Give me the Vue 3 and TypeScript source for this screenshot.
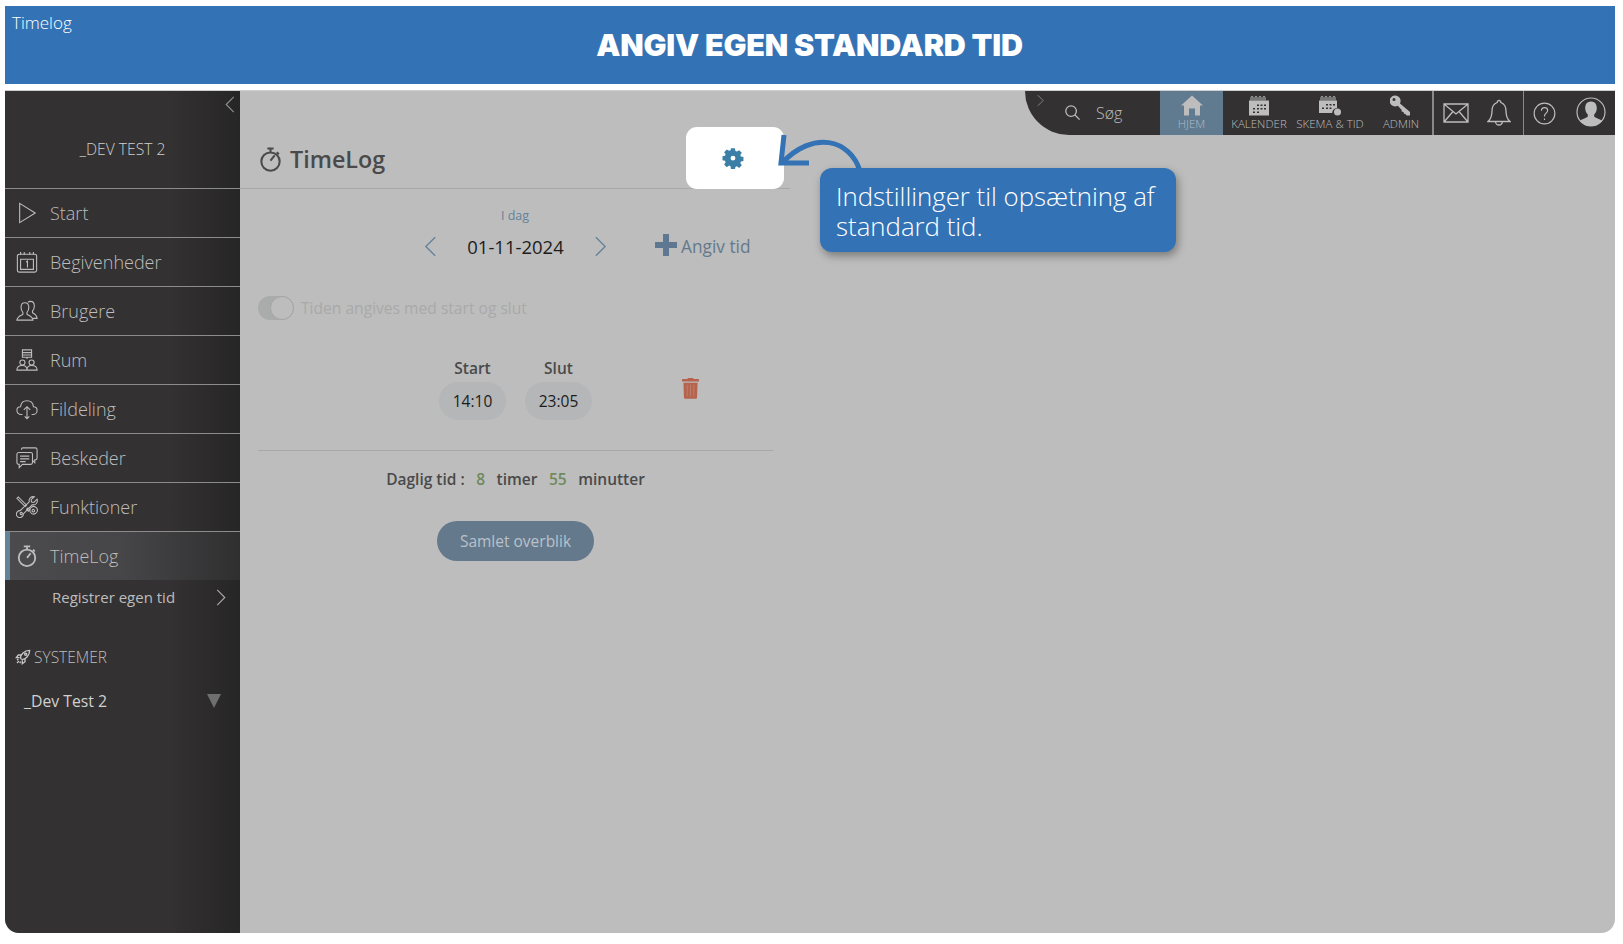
<template>
  <div class="page">
    <header class="banner">
      <span class="banner-label">Timelog</span>
      <h1 class="banner-title">ANGIV EGEN STANDARD TID</h1>
    </header>

    <div class="app">
      <aside class="sidebar">
        <svg class="collapse" viewBox="0 0 10 18"><path d="M9 1 1 9l8 8" /></svg>
        <div class="org-name">_DEV TEST 2</div>
        <nav>
          <div v-for="item in navItems" :key="item.label" class="nav-row" :class="{ active: item.active }">
            <svg class="nav-icon" viewBox="0 0 24 24">
              <path v-for="d in item.paths" :key="d" :d="d" />
            </svg>
            <span>{{ item.label }}</span>
          </div>
        </nav>
        <div class="sub-row">
          <span>Registrer egen tid</span>
          <svg class="sub-chevron" viewBox="0 0 10 18"><path d="M1 1l8 8-8 8" /></svg>
        </div>
        <div class="systems-head">
          <svg class="rocket" viewBox="0 0 24 24">
            <path d="M9 15c-1-2 0-6 3-9s6-4 10-4c0 4-1 7-4 10s-7 4-9 3Z" />
            <path d="M9 9H5l-3 4h5M15 15v4l-4 3v-5M6 18l-3 3M5 15l-2 2M9 19l-2 2" />
            <circle cx="16" cy="8" r="1.6" />
          </svg>
          <span>SYSTEMER</span>
        </div>
        <div class="system-row">
          <span>_Dev Test 2</span>
          <i class="system-caret"></i>
        </div>
      </aside>

      <main class="main">
        <section class="panel">
          <div class="panel-head">
            <h2 class="panel-title">
              <svg class="title-icon" viewBox="0 0 24 24">
                <path d="M9 1.5h6M12 1.5V5M18 5l2 2M12 13l4-5" />
                <circle cx="12" cy="14" r="8.8" />
              </svg>
              TimeLog
            </h2>
            <div class="gear-box">
              <svg class="gear" viewBox="0 0 24 24">
                <path fill-rule="evenodd" d="M9.6 1h4.8l.6 3.2 1.9.8 2.7-1.8 3.4 3.4-1.9 2.7.8 1.9 3.1.6v4.8l-3.1.6-.8 1.9 1.9 2.7-3.4 3.4-2.7-1.9-1.9.8-.6 3.1H9.6L9 23.2l-1.9-.8-2.7 1.9L1 20.9l1.9-2.7-.8-1.9L-1 15.7v-4.8l3.1-.6.8-1.9L1 5.7l3.4-3.4 2.7 1.8L9 3.4ZM12 10.200a3 3 0 1 0 0 6 3 3 0 0 0 0-6Z" transform="translate(1.4 .6) scale(.88)" />
              </svg>
            </div>
          </div>

          <div class="today">I dag</div>
          <div class="date-row">
            <svg class="date-chevron" viewBox="0 0 14 24"><path d="M12 2 2 12l10 10" /></svg>
            <span class="date">01-11-2024</span>
            <svg class="date-chevron" viewBox="0 0 14 24"><path d="M2 2l10 10L2 22" /></svg>
            <span class="add-time"><i class="plus"></i>Angiv tid</span>
          </div>

          <div class="toggle-row">
            <span class="toggle"><i class="knob"></i></span>
            <span>Tiden angives med start og slut</span>
          </div>

          <div class="time-row">
            <div v-for="t in times" :key="t.label" class="time-col">
              <label>{{ t.label }}</label>
              <span class="time-pill">{{ t.value }}</span>
            </div>
            <svg class="trash" viewBox="0 0 18 23">
              <path d="M6 2V.8h6V2h5a1 1 0 0 1 1 1v1.500H0V3a1 1 0 0 1 1-1ZM1.500 6h15l-.6 15.500a1.500 1.500 0 0 1-1.500 1.500H3.600a1.500 1.500 0 0 1-1.500-1.500Z" />
              <path class="trash-lines" d="M5.500 8v12.500M9 8v12.500M12.500 8v12.500" />
            </svg>
          </div>

          <div class="daily">
            <span>Daglig tid :</span><em>8</em><span>timer</span><em>55</em><span>minutter</span>
          </div>
          <button class="overview" type="button">Samlet overblik</button>
        </section>

        <div class="toolbar">
          <svg class="bar-chevron" viewBox="0 0 8 14"><path d="M1 1l6 6-6 6" /></svg>
          <div class="search">
            <svg viewBox="0 0 24 24"><circle cx="10" cy="10" r="7.500" /><path d="M15.500 15.500 22 22" /></svg>
            <span>Søg</span>
          </div>
          <div class="tool home">
            <svg viewBox="0 0 22 20"><path class="solid" d="M11 0 22 10h-3v10h-5v-7H8v7H3V10H0Z" /></svg>
            <span>HJEM</span>
          </div>
          <div class="tool cal">
            <svg viewBox="0 0 22 20">
              <path class="rings" d="M3 5V2a1 1 0 0 1 2 0v3M7 5V2a1 1 0 0 1 2 0v3M11 5V2a1 1 0 0 1 2 0v3M15 5V2a1 1 0 0 1 2 0v3" />
              <path class="solid" fill-rule="evenodd" d="M1 5h20v15H1ZM9 9v1.500h2V9Zm3.500 0v1.500h2V9Zm3.500 0v1.500h2V9ZM5 12.500V14h2v-1.500Zm4 0V14h2v-1.500Zm3.500 0V14h2v-1.500Zm3.500 0V14h2v-1.500ZM5 16v1.500h2V16Zm4 0v1.500h2V16Z" />
            </svg>
            <span>KALENDER</span>
          </div>
          <div class="tool sched">
            <svg viewBox="0 0 22 20">
              <path class="rings" d="M2 5V2a1 1 0 0 1 2 0v3M6 5V2a1 1 0 0 1 2 0v3M10 5V2a1 1 0 0 1 2 0v3M14 5V2a1 1 0 0 1 2 0v3" />
              <path class="solid" fill-rule="evenodd" d="M0 5h18v7.500a5.500 5.500 0 0 0-4.800 5H0ZM7 8.500V10h2V8.500Zm3.500 0V10h2V8.500Zm3.500 0V10h2V8.500ZM3 12v1.500h2V12Zm4 0v1.500h2V12Zm3.500 0v1.500h2V12Z" />
              <circle class="solid" cx="18.500" cy="16.500" r="3.500" />
            </svg>
            <span>SKEMA &amp; TID</span>
          </div>
          <div class="tool admin">
            <svg viewBox="0 0 22 20">
              <path class="solid" fill-rule="evenodd" d="M5 0a5.500 5.500 0 0 1 5 8l10 8.500V20h-3.500l-1-1.500-1.500-.2-.5-1.800-1.800-.5-.2-1.700-3.700-4A5.500 5.500 0 1 1 5 0ZM4 2.500a1.500 1.500 0 1 0 0 3 1.500 1.500 0 0 0 0-3Z" />
            </svg>
            <span>ADMIN</span>
          </div>
          <div class="icon-group mail-group">
            <svg class="mail" viewBox="0 0 26 20"><path d="M1 1h24v18H1ZM1 1l12 10L25 1M1 19l9-10.500M25 19l-9-10.500" /></svg>
            <svg class="bell" viewBox="0 0 24 28"><path d="M12 1.500a1.800 1.800 0 0 1 1.800 2C18 5 19 8 19 12c0 5 1 8 4 10.500H1C4 20 5 17 5 12c0-4 1-7 5.200-8.500A1.800 1.800 0 0 1 12 1.500ZM8.500 22.500a3.500 3.500 0 0 0 7 0" /></svg>
          </div>
          <div class="icon-group help-group">
            <svg class="help" viewBox="0 0 24 24">
              <circle cx="12" cy="12" r="10.800" />
              <path d="M8.800 9.200c0-2 1.400-3.300 3.300-3.300s3.200 1.200 3.200 3c0 2.700-3.300 2.800-3.300 5.600v.6M12 17.200v1.500" />
            </svg>
            <svg class="avatar" viewBox="0 0 30 30">
              <circle class="ring" cx="15" cy="15" r="14" />
              <path class="solid" d="M15 4.500c3.800 0 5.800 2.800 5.800 6.500 0 2.800-1 5.200-2.600 6.600v2c1 1.400 5.600 2.300 7.700 4.300A13 13 0 0 1 15 29 13 13 0 0 1 4.100 23.900c2.100-2 6.700-2.900 7.700-4.300v-2C10.200 16.200 9.200 13.800 9.200 11c0-3.700 2-6.500 5.800-6.500Z" />
            </svg>
          </div>
        </div>

        <svg class="arrow" viewBox="0 0 90 40">
          <path d="M83 38C73 6 36 -3 5 30" />
          <path d="M7 2 4 30h28" />
        </svg>
        <div class="callout">Indstillinger til opsætning af standard tid.</div>
      </main>
    </div>
  </div>
</template>

<script setup lang="ts">
interface NavItem {
  label: string
  paths: string[]
  active?: boolean
}

const navItems: NavItem[] = [
  { label: 'Start', paths: ['M4 1.500 21 12 4 22.500Z'] },
  {
    label: 'Begivenheder',
    paths: [
      'M3.500 3.500h17a2 2 0 0 1 2 2V21a2 2 0 0 1-2 2h-17a2 2 0 0 1-2-2V5.500a2 2 0 0 1 2-2Z',
      'M5 1v3M9 1v3M15 1v3M19 1v3M5 9h14v11H5ZM11 12l1.500-1v7'
    ]
  },
  {
    label: 'Brugere',
    paths: [
      'M9.500 3c3 0 4.500 2.300 4.500 5s-1 4.500-2 5.500v2c2 1.500 6 2 6.500 6.500H1c.5-4.500 4.500-5 6.500-6.500v-2c-1-1-2-2.800-2-5.500s1-5 4-5Z',
      'M13 2.500c.8-.8 1.800-1 2.800-1 3 0 4.200 2.300 4.200 5s-1 4.500-2 5.500v2c2 1 4.500 2 5 6h-5'
    ]
  },
  {
    label: 'Rum',
    paths: [
      'M7 1h10v8H7ZM7 4h10M7 6.500h10M12 9v2',
      'M7 12a2.800 2.800 0 1 1 0 5.600A2.800 2.800 0 0 1 7 12ZM17 12a2.800 2.800 0 1 1 0 5.600 2.800 2.800 0 0 1 0-5.600Z',
      'M1 23c0-3.500 2.500-5 6-5s5 1.500 5 5ZM12 23c0-3.500 1.500-5 5-5s6 1.500 6 5Z'
    ]
  },
  {
    label: 'Fildeling',
    paths: [
      'M7 18H5.500C3 18 1 16 1 13.500S3 9.500 5 9.500C5.500 5 8.500 3 12 3s6.500 2 7 6.500c2 0 4 1.500 4 4S21 18 18.500 18H17',
      'M12 9.500v13M8.500 13 12 9.500l3.500 3.500M9.500 20l2.500 2.500 2.500-2.500'
    ]
  },
  {
    label: 'Beskeder',
    paths: [
      'M3 6h13a2 2 0 0 1 2 2v9a2 2 0 0 1-2 2H7l-3.500 3.500V19H3a2 2 0 0 1-2-2V8a2 2 0 0 1 2-2Z',
      'M6 3V2.500a1.500 1.500 0 0 1 1.500-1.500H21a2 2 0 0 1 2 2v9a2 2 0 0 1-2 2h-.5v3L18 14.500',
      'M4.500 10h10M4.500 13h10M4.500 16h6'
    ]
  },
  {
    label: 'Funktioner',
    paths: [
      'M1 2.500 2.500 1 11.500 10 10 11.500ZM13 13l2 2-1.500 1.500-2-2Z',
      'M15 15.500a4.200 4.200 0 1 1 0 .1ZM17.500 16a1.400 1.400 0 1 1 0 .1Z',
      'M23 3.500 19.500 7l-2.500-.5L16.500 4 20 .8c-3.500-.8-6.500 2-5.500 5.500L4.500 16a3.800 3.800 0 1 0 3.500 3.500L17.800 9.500c3.500 1 6.500-2.500 5.200-6Z',
      'M4.500 19a1.200 1.200 0 1 1 0 .1Z'
    ]
  },
  {
    label: 'TimeLog',
    active: true,
    paths: [
      'M8.500 1.500h7M12 1.500V5M18.500 5l2 2M12 14l4-5',
      'M12 5a9 9 0 1 1 0 18 9 9 0 0 1 0-18Z'
    ]
  }
]

const times = [
  { label: 'Start', value: '14:10' },
  { label: 'Slut', value: '23:05' }
]
</script>

<style scoped>
.page {
  width: 1610px;
  margin-left: 5px;
  padding-top: 6px;
  font-family: "Open Sans", "Liberation Sans", sans-serif;
}
.banner {
  height: 78px;
  background: #3373b5;
  color: #fff;
  position: relative;
  display: flex;
  justify-content: center;
  box-sizing: border-box;
  padding-top: 19px;
}
.banner-label {
  position: absolute;
  left: 7px;
  top: 5px;
  font-size: 17px;
  font-weight: 300;
  line-height: 24px;
}
.banner-title {
  margin: 0 0 0 -1px;
  font-family: Inter, "Liberation Sans", sans-serif;
  font-size: 30.500px;
  font-weight: 900;
  line-height: 40px;
  letter-spacing: -0.2px;
}
.app {
  margin-top: 6px;
  height: 843px;
  display: flex;
  border-top: 1px solid #cfcfcf;
  box-sizing: border-box;
  border-radius: 0 0 14px 14px;
  overflow: hidden;
  background: #bdbdbd;
}

/* sidebar */
.sidebar {
  width: 235px;
  flex: none;
  position: relative;
  background: linear-gradient(90deg, #333132 0%, #333132 70%, #272626 100%);
  color: #bdbdbd;
}
.collapse {
  position: absolute;
  left: 220px;
  top: 5px;
  width: 10px;
  height: 17px;
  fill: none;
  stroke: #8f8f8f;
  stroke-width: 1.2;
}
.org-name {
  height: 97px;
  box-sizing: border-box;
  padding-top: 48px;
  text-align: center;
  font-size: 15.700px;
  font-weight: 300;
  line-height: 20px;
  color: #cfcfcf;
}
.nav-row {
  height: 49px;
  box-sizing: border-box;
  border-top: 1px solid #8c8c8c;
  display: flex;
  align-items: center;
  gap: 12px;
  padding-left: 11px;
  font-size: 18px;
  font-weight: 300;
}
.nav-row.active {
  background: linear-gradient(90deg, #4b4a4c 0%, #464547 50%, #302f30 100%);
  box-shadow: inset 5px 0 0 #64839b;
}
.nav-icon {
  width: 22px;
  height: 22px;
  flex: none;
  fill: none;
  stroke: #bdbdbd;
  stroke-width: 1.2;
}
.active .nav-icon {
  stroke-width: 2;
}
.sub-row {
  height: 34px;
  display: flex;
  align-items: center;
  justify-content: space-between;
  padding: 0 14px 0 47px;
  font-size: 15px;
  color: #bdbdbd;
  font-weight: 400;
}
.sub-chevron {
  width: 10px;
  height: 17px;
  fill: none;
  stroke: #a9a9a9;
  stroke-width: 1.2;
}
.systems-head {
  margin-top: 32px;
  display: flex;
  align-items: center;
  gap: 3px;
  padding-left: 10px;
  height: 22px;
  font-size: 15.500px;
  font-weight: 300;
}
.rocket {
  width: 16px;
  height: 16px;
  fill: none;
  stroke: #c6c6c6;
  stroke-width: 2;
}
.system-row {
  margin-top: 22px;
  height: 22px;
  display: flex;
  align-items: center;
  justify-content: space-between;
  padding: 0 19px 0 19px;
  font-size: 15.800px;
  font-weight: 400;
  color: #d0d0d0;
}
.system-caret {
  margin-top: -1px;
  width: 0;
  height: 0;
  border-left: 7px solid transparent;
  border-right: 7px solid transparent;
  border-top: 14px solid #6f6f6f;
}

/* main */
.main {
  flex: 1;
  position: relative;
  display: flex;
  justify-content: space-between;
  align-items: flex-start;
}
.panel {
  width: 550px;
  display: flex;
  flex-direction: column;
}
.panel-head {
  height: 98px;
  box-sizing: border-box;
  border-bottom: 1px solid #a8a8a8;
  display: flex;
  align-items: flex-end;
  justify-content: space-between;
  padding-left: 18px;
  padding-right: 6px;
}
.panel-title {
  margin: 0 0 11px;
  display: flex;
  align-items: center;
  gap: 7px;
  font-size: 23.300px;
  line-height: 36px;
  font-weight: 600;
  color: #4a4a4a;
}
.title-icon {
  width: 25px;
  height: 27px;
  fill: none;
  stroke: #4a4a4a;
  stroke-width: 2;
}
.gear-box {
  width: 98px;
  height: 62px;
  margin-bottom: -1px;
  background: #fff;
  border-radius: 11px;
  display: flex;
  align-items: center;
  justify-content: center;
  padding-right: 4px;
  box-sizing: border-box;
}
.gear {
  width: 22px;
  height: 22px;
  fill: #3b7fa6;
}
.today {
  margin-top: 18px;
  text-align: center;
  font-size: 12.500px;
  line-height: 18px;
  color: #64839b;
}
.date-row {
  margin-top: 5px;
  height: 32px;
  display: flex;
  align-items: center;
  padding-left: 184px;
  position: relative;
}
.date-chevron {
  width: 13px;
  height: 23px;
  fill: none;
  stroke: #64839b;
  stroke-width: 1.5;
}
.date {
  width: 157px;
  text-align: center;
  font-size: 18.500px;
  color: #1c1c1c;
}
.add-time {
  margin-left: 48px;
  display: flex;
  align-items: center;
  gap: 4px;
  font-size: 17.300px;
  color: #64798c;
}
.plus {
  position: relative;
  width: 22px;
  height: 22px;
  margin-top: -3px;
  background:
    linear-gradient(#5d7890, #5d7890) center / 22px 6px no-repeat,
    linear-gradient(#5d7890, #5d7890) center / 6px 22px no-repeat;
  border-radius: 3px;
}
.toggle-row {
  margin-top: 34px;
  padding-left: 18px;
  display: flex;
  align-items: center;
  gap: 7px;
  height: 24px;
  font-size: 15.600px;
  color: #a9a9a9;
}
.toggle {
  width: 36px;
  height: 24px;
  border-radius: 12px;
  background: #a9acaa;
  display: flex;
  justify-content: flex-end;
  box-sizing: border-box;
}
.knob {
  width: 24px;
  height: 24px;
  box-sizing: border-box;
  border-radius: 50%;
  background: #bdbdbd;
  border: 1px solid #a5a5a5;
}
.time-row {
  margin-top: 37px;
  padding-left: 199px;
  display: flex;
  gap: 19px;
  align-items: flex-start;
}
.time-col {
  display: flex;
  flex-direction: column;
  align-items: center;
  gap: 3px;
}
.time-col label {
  font-size: 15.500px;
  line-height: 22px;
  font-weight: 600;
  color: #4a4a4a;
}
.time-pill {
  width: 67px;
  height: 38px;
  border-radius: 19px;
  background: #b4b6b8;
  display: flex;
  align-items: center;
  justify-content: center;
  font-size: 15.500px;
  color: #1c1c1c;
}
.trash {
  margin: 20px 0 0 71px;
  width: 17px;
  height: 22px;
  fill: #b5634d;
}
.trash-lines {
  fill: none;
  stroke: #bd8070;
  stroke-width: 1;
}
.daily {
  margin: 30px 0 0 18px;
  width: 515px;
  border-top: 1px solid #a8a8a8;
  padding-top: 17px;
  display: flex;
  justify-content: center;
  gap: 11.500px;
  font-size: 15.500px;
  line-height: 22px;
  font-weight: 600;
  color: #4a4a4a;
}
.daily em {
  font-style: normal;
  color: #6f8a5c;
}
.overview {
  margin: 31px 0 0 197px;
  width: 157px;
  height: 40px;
  border: none;
  border-radius: 20px;
  background: #64798c;
  color: #b9c2ca;
  font-family: inherit;
  font-size: 15.500px;
}

/* toolbar */
.toolbar {
  height: 44px;
  width: 590px;
  background: #333132;
  color: #bdbdbd;
  border-bottom-left-radius: 44px;
  display: flex;
  position: relative;
  font-size: 11.500px;
  font-weight: 300;
}
.bar-chevron {
  position: absolute;
  left: 12px;
  top: 3px;
  width: 7px;
  height: 13px;
  fill: none;
  stroke: #8f8f8f;
}
.search {
  width: 135px;
  box-sizing: border-box;
  padding-left: 39px;
  padding-bottom: 1px;
  display: flex;
  align-items: center;
  gap: 15px;
  font-size: 16px;
}
.search svg {
  width: 17px;
  height: 17px;
  fill: none;
  stroke: #bdbdbd;
  stroke-width: 1.800;
}
.tool {
  display: flex;
  flex-direction: column;
  align-items: center;
  justify-content: flex-end;
  padding-bottom: 4px;
  box-sizing: border-box;
  line-height: 15px;
}
.tool svg {
  height: 21px;
  width: 22px;
  margin-bottom: 0;
}
.solid {
  fill: #bdbdbd;
}
.rings {
  fill: none;
  stroke: #bdbdbd;
  stroke-width: 1;
}
.home {
  width: 63px;
  background: #607a90;
  color: #aebbc6;
}
.cal {
  width: 72px;
}
.sched {
  width: 70px;
}
.admin {
  width: 69px;
  padding-left: 5px;
  border-right: 2px solid #8a8a8a;
}
.icon-group {
  display: flex;
  align-items: center;
  box-sizing: border-box;
}
.mail-group {
  width: 90px;
  padding-left: 9px;
  gap: 18px;
  border-right: 1px solid #8a8a8a;
}
.mail {
  width: 26px;
  height: 20px;
  fill: none;
  stroke: #bdbdbd;
  stroke-width: 1.300;
}
.bell {
  width: 24px;
  height: 28px;
  fill: none;
  stroke: #bdbdbd;
  stroke-width: 1.300;
}
.help-group {
  flex: 1;
  padding-left: 9px;
  gap: 20px;
}
.help {
  width: 23px;
  height: 23px;
  fill: none;
  stroke: #bdbdbd;
  stroke-width: 1.200;
}
.avatar {
  width: 30px;
  height: 30px;
  margin-top: -3px;
}
.ring {
  fill: none;
  stroke: #bdbdbd;
  stroke-width: 1.200;
}
.arrow {
  position: absolute;
  left: 537px;
  top: 42px;
  width: 90px;
  height: 40px;
  overflow: visible;
  fill: none;
  stroke: #3373b5;
  stroke-width: 5;
}
.callout {
  position: absolute;
  left: 580px;
  top: 77px;
  width: 356px;
  height: 84px;
  box-sizing: border-box;
  padding: 13px 16px;
  border-radius: 12px;
  background: #3373b5;
  color: #fff;
  font-size: 25.800px;
  font-weight: 300;
  line-height: 30px;
  box-shadow: 2px 4px 8px rgba(0, 0, 0, 0.35);
}
</style>

<style>
html,
body {
  background: #fff;
}
</style>
